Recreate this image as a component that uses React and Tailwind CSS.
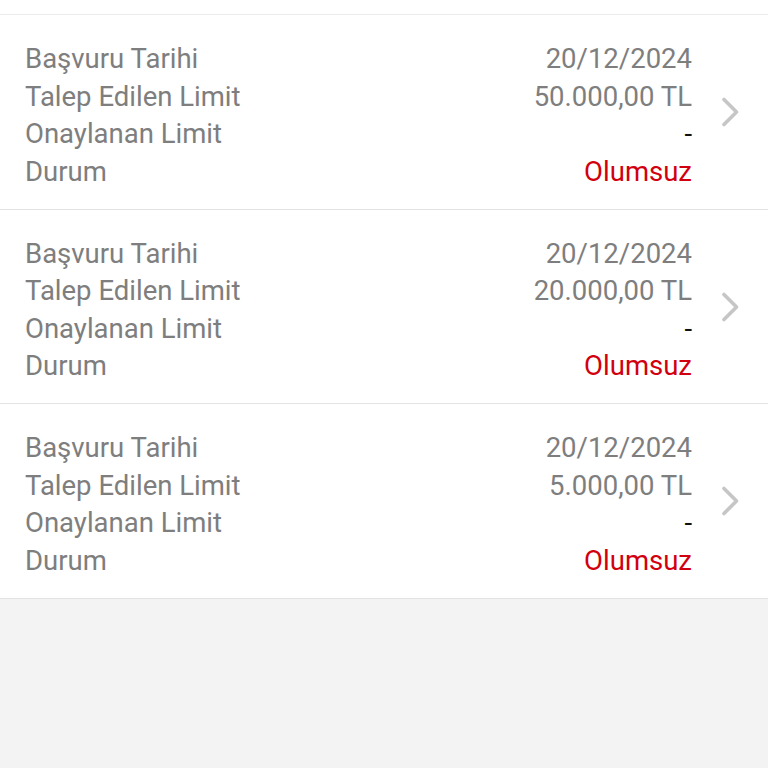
import React from "react";

const items = [
  { date: "20/12/2024", requested: "50.000,00 TL", approved: "-", status: "Olumsuz" },
  { date: "20/12/2024", requested: "20.000,00 TL", approved: "-", status: "Olumsuz" },
  { date: "20/12/2024", requested: "5.000,00 TL", approved: "-", status: "Olumsuz" },
];

const Chevron = () => (
  <svg width="22" height="30" viewBox="0 0 22 30" fill="none" className="shrink-0">
    <path d="M4 2.5 L16.5 15 L4 27.5" stroke="#c6c6c6" strokeWidth="3.6" strokeLinecap="round" strokeLinejoin="round" />
  </svg>
);

const App = () => {
  return (
    <div className="min-h-screen bg-[#f3f3f3]" style={{ fontFamily: "Roboto, 'Noto Sans', sans-serif" }}>
      <div className="h-[15px] bg-white border-b border-[#ebebeb]" />
      {items.map((it, i) => (
        <div key={i} className="flex items-center bg-white border-b border-[#e3e3e3] pl-[25px] pr-[26px] pt-[25px] pb-[18.5px]">
          <div className="flex-1 flex justify-between text-[27.5px] leading-[37.5px]">
            <div className="flex flex-col text-[#7e7e7e]">
              <span>Başvuru Tarihi</span>
              <span>Talep Edilen Limit</span>
              <span>Onaylanan Limit</span>
              <span>Durum</span>
            </div>
            <div className="flex flex-col items-end">
              <span className="text-[#7e7e7e]">{it.date}</span>
              <span className="text-[#7e7e7e]">{it.requested}</span>
              <span className="text-[#111111]">{it.approved}</span>
              <span className="text-[#d2000f]">{it.status}</span>
            </div>
          </div>
          <div className="ml-[28px] -mt-[6px]">
            <Chevron />
          </div>
        </div>
      ))}
    </div>
  );
};

export default App;
